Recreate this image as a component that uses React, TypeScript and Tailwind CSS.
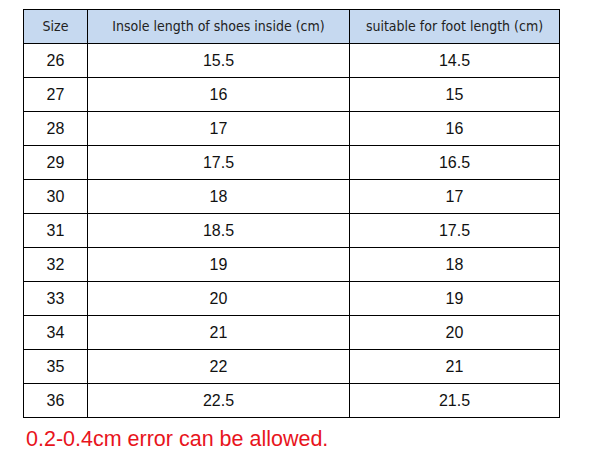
import React from "react";

const rows: [string, string, string][] = [
  ["26", "15.5", "14.5"],
  ["27", "16", "15"],
  ["28", "17", "16"],
  ["29", "17.5", "16.5"],
  ["30", "18", "17"],
  ["31", "18.5", "17.5"],
  ["32", "19", "18"],
  ["33", "20", "19"],
  ["34", "21", "20"],
  ["35", "22", "21"],
  ["36", "22.5", "21.5"],
];

export default function App() {
  return (
    <div className="w-[596px] h-[462px] bg-white pt-[9px] pl-[23px]" style={{ fontFamily: '"Liberation Sans", Arial, sans-serif' }}>
      <table className="border-collapse text-[16px] text-[#111]">
        <colgroup>
          <col className="w-[64px]" />
          <col className="w-[262px]" />
          <col className="w-[210px]" />
        </colgroup>
        <thead>
          <tr className="h-[34px] bg-[#c6d9f0]">
            <th className="border-[1.5px] border-black font-normal text-[14px] text-[#222] p-0" style={{ fontFamily: '"DejaVu Sans Condensed", "DejaVu Sans", sans-serif' }}>Size</th>
            <th className="border-[1.5px] border-black font-normal text-[14px] text-[#222] p-0" style={{ fontFamily: '"DejaVu Sans Condensed", "DejaVu Sans", sans-serif' }}>Insole length of shoes inside (cm)</th>
            <th className="border-[1.5px] border-black font-normal text-[14px] text-[#222] p-0" style={{ fontFamily: '"DejaVu Sans Condensed", "DejaVu Sans", sans-serif' }}>suitable for foot length (cm)</th>
          </tr>
        </thead>
        <tbody>
          {rows.map((r) => (
            <tr key={r[0]} className="h-[34px]">
              <td className="border-[1.5px] border-black text-center p-0">{r[0]}</td>
              <td className="border-[1.5px] border-black text-center p-0">{r[1]}</td>
              <td className="border-[1.5px] border-black text-center p-0">{r[2]}</td>
            </tr>
          ))}
        </tbody>
      </table>
      <div className="mt-[9px] ml-[3px] text-[21.5px] leading-[24px] text-[#e8141c]">0.2-0.4cm error can be allowed.</div>
    </div>
  );
}
